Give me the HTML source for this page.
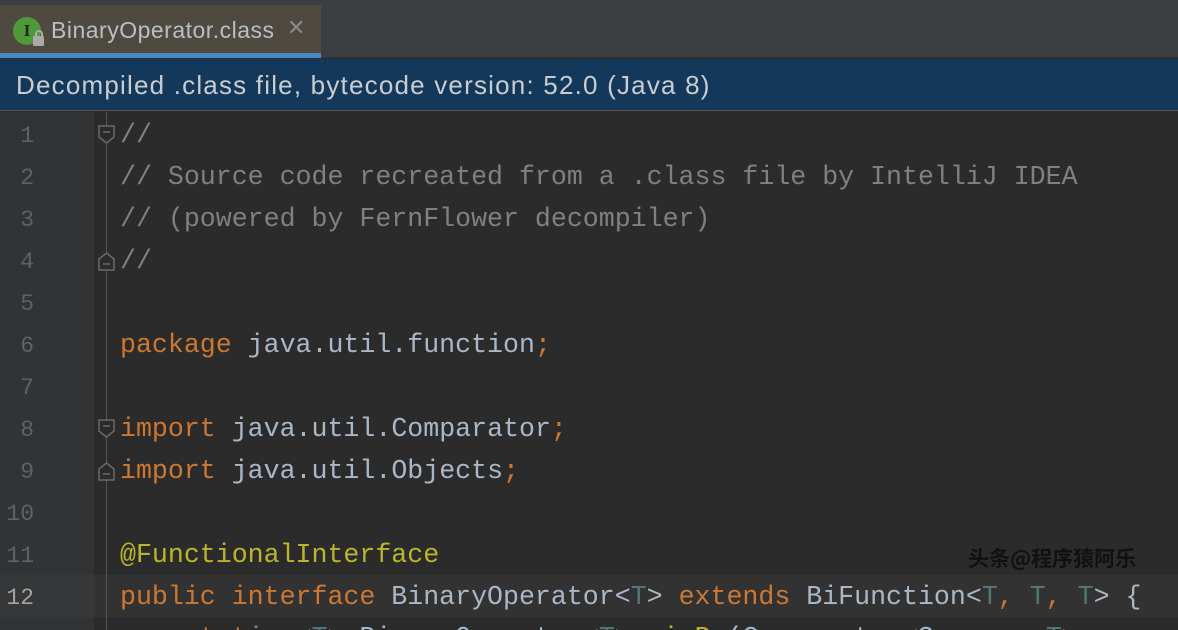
<!DOCTYPE html>
<html><head><meta charset="utf-8"><style>
*{margin:0;padding:0;box-sizing:border-box}
html,body{width:1178px;height:630px;overflow:hidden}
body{background:#2b2b2b;position:relative;font-family:"Liberation Sans",sans-serif}
#wrap{position:absolute;left:0;top:0;width:1178px;height:630px;overflow:hidden}
#top{position:absolute;left:0;top:0;width:1178px;height:5px;background:#3c3f41}
#tabs{position:absolute;left:0;top:5px;width:1178px;height:53px;background:#3c3f41;border-bottom:1px solid #323232}
#tab{position:absolute;left:0;top:0;width:321px;height:53px;background:#4e4a40}
#tabul{position:absolute;left:0;top:48px;width:321px;height:5px;background:#4a88c7}
#tabtxt{position:absolute;left:51px;top:12px;font-size:23px;letter-spacing:0.5px;color:#bbbfc4}
#x{position:absolute;left:287px;top:10px;font-size:22px;color:#8a8a8a}
#icon{position:absolute;left:13px;top:12px;width:28px;height:28px;border-radius:50%;background:#4e9a3a;color:#222;font:bold 17px "Liberation Serif",serif;text-align:center;line-height:28px}
#lock{position:absolute;left:33px;top:31px;width:11px;height:10px;background:#aaa;border-radius:1px}
#lock:before{content:"";position:absolute;left:2px;top:-6px;width:4px;height:6px;border:2px solid #aaa;border-bottom:none;border-radius:4px 4px 0 0}
#banner{position:absolute;left:0;top:59px;width:1178px;height:52px;background:#133859;color:#c9cdd1;font-size:26px;letter-spacing:1.2px;padding:11px 0 0 16px;border-bottom:1px solid #555;white-space:nowrap}
#gutter{position:absolute;left:0;top:112px;width:94px;height:518px;background:#313335}
#fold{position:absolute;left:106px;top:112px;width:1px;height:518px;background:#555}
#cur{position:absolute;left:0;top:575px;width:1178px;height:42px;background:#323232}
#cur2{position:absolute;left:0;top:575px;width:94px;height:42px;background:#353739}
.ln{position:absolute;left:0;width:34px;text-align:right;font:23px "Liberation Mono",monospace;color:#5f6264}
.code{position:absolute;left:120px;font:26.6px "Liberation Mono",monospace;color:#a9b7c6;white-space:pre}
.c{color:#808080}.k{color:#cc7832}.a{color:#bbb529}.t{color:#507874}
#wm{position:absolute;left:968px;top:543px;font:bold 21px "Noto Sans CJK SC",sans-serif;color:#111}
</style></head><body><div id="wrap">
<div id="top"></div>
<div id="tabs"><div id="tab"></div><div id="tabul"></div>
<div id="icon">I</div><div id="lock"></div>
<div id="tabtxt">BinaryOperator.class</div><div id="x">✕</div></div>
<div id="banner">Decompiled .class file, bytecode version: 52.0 (Java 8)</div>
<div id="gutter"></div>
<div id="cur"></div><div id="cur2"></div>
<div id="fold"></div>
<svg style="position:absolute;left:0;top:0" width="130" height="630">
<g fill="#2b2b2b" stroke="#6a6a6a" stroke-width="1.5">
<path d="M99 126h15v11l-7.5 6l-7.5-6z"/><path d="M99 270h15v-11l-7.5-6l-7.5 6z"/>
<path d="M99 420h15v11l-7.5 6l-7.5-6z"/><path d="M99 480h15v-11l-7.5-6l-7.5 6z"/>
</g>
<g stroke="#6a6a6a" stroke-width="1.5"><path d="M103 132h7M103 264h7M103 426h7M103 474h7"/></g>
<rect x="138" y="545" width="14" height="18" fill="#e0b020"/><path d="M140 566h10M140 570h10" stroke="#ccc" stroke-width="2"/>
</svg>
<div class="ln" style="top:123px">1</div>
<div class="ln" style="top:165px">2</div>
<div class="ln" style="top:207px">3</div>
<div class="ln" style="top:249px">4</div>
<div class="ln" style="top:291px">5</div>
<div class="ln" style="top:333px">6</div>
<div class="ln" style="top:375px">7</div>
<div class="ln" style="top:417px">8</div>
<div class="ln" style="top:459px">9</div>
<div class="ln" style="top:501px">10</div>
<div class="ln" style="top:543px">11</div>
<div class="ln" style="top:585px;color:#a4a3a3">12</div>
<div class="ln" style="top:627px">13</div>
<div class="code c" style="top:120px">//</div>
<div class="code c" style="top:162px">// Source code recreated from a .class file by IntelliJ IDEA</div>
<div class="code c" style="top:204px">// (powered by FernFlower decompiler)</div>
<div class="code c" style="top:246px">//</div>
<div class="code" style="top:330px"><span class="k">package</span> java.util.function<span class="k">;</span></div>
<div class="code" style="top:414px"><span class="k">import</span> java.util.Comparator<span class="k">;</span></div>
<div class="code" style="top:456px"><span class="k">import</span> java.util.Objects<span class="k">;</span></div>
<div class="code a" style="top:540px">@FunctionalInterface</div>
<div class="code" style="top:582px"><span class="k">public interface</span> BinaryOperator&lt;<span class="t">T</span>&gt; <span class="k">extends</span> BiFunction&lt;<span class="t">T</span><span class="k">,</span> <span class="t">T</span><span class="k">,</span> <span class="t">T</span>&gt; {</div>
<div class="code" style="top:623px">    <span class="k">static</span> &lt;<span class="t">T</span>&gt; BinaryOperator&lt;<span class="t">T</span>&gt; <span class="a">minBy</span>(Comparator&lt;? <span class="k">super</span> <span class="t">T</span>&gt; comp</div>
<div id="wm">头条@程序猿阿乐</div>
</div></body></html>
